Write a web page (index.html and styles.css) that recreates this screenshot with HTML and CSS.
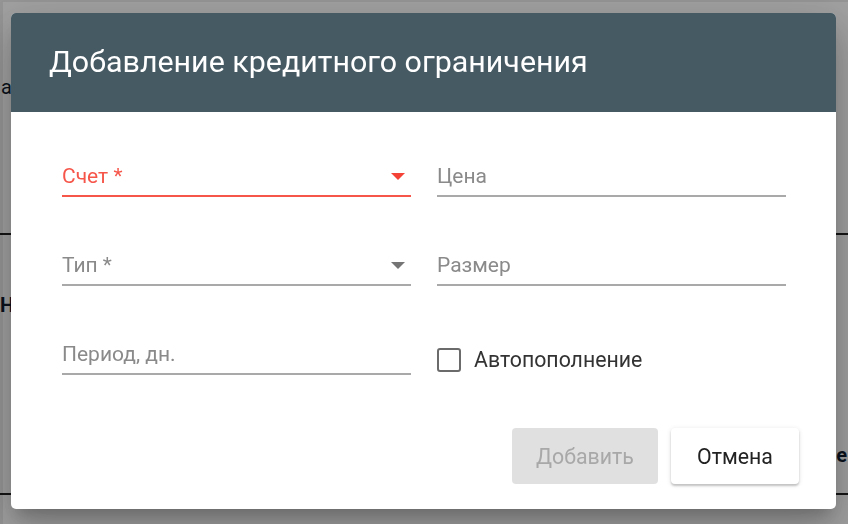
FILE: index.html
```html
<!DOCTYPE html>
<html lang="ru">
<head>
<meta charset="utf-8">
<title>Добавление кредитного ограничения</title>
<link rel="stylesheet" href="styles.css">
</head>
<body>
<div class="page">
  <div class="pg-top"><span class="pg-cut">а</span></div>
  <div class="pg-line"></div>
  <div class="pg-mid"><span class="pg-cut2">Н</span></div>
  <div class="pg-row"><span class="pg-right">е</span></div>
  <div class="pg-line"></div>
</div>
<div class="backdrop">
  <div class="dialog">
    <div class="dlg-head">Добавление кредитного ограничения</div>
    <div class="dlg-body">
      <div class="field error">
        <span class="label">Счет *</span>
        <svg class="arrow" width="14" height="7" viewBox="0 0 14 7"><path d="M0 0h14L7 7z" fill="currentColor"/></svg>
      </div>
      <div class="field"><span class="label">Цена</span></div>
      <div class="field">
        <span class="label">Тип *</span>
        <svg class="arrow" width="14" height="7" viewBox="0 0 14 7"><path d="M0 0h14L7 7z" fill="currentColor"/></svg>
      </div>
      <div class="field"><span class="label">Размер</span></div>
      <div class="field"><span class="label">Период, дн.</span></div>
      <label class="check"><span class="box"></span><span class="check-text">Автопополнение</span></label>
    </div>
    <div class="dlg-actions">
      <button class="btn btn-disabled" disabled>Добавить</button>
      <button class="btn btn-cancel">Отмена</button>
    </div>
  </div>
</div>
</body>
</html>
```
FILE: styles.css
```css
html, body {
  margin: 0;
  padding: 0;
  height: 100%;
}
body {
  background: #ffffff;
  font-family: Roboto, "Liberation Sans", Arial, sans-serif;
  overflow: hidden;
}
.page {
  width: 848px;
  height: 524px;
  color: #111c2e;
  font-size: 20px;
}
.pg-top {
  height: 233px;
  box-sizing: border-box;
  padding-top: 75px;
  white-space: nowrap;
}
.pg-cut { margin-left: 1px; }
.pg-line {
  height: 2px;
  background: #222;
}
.pg-mid {
  height: 90px;
  box-sizing: border-box;
  padding-top: 58px;
  font-weight: 700;
}
.pg-row {
  height: 168px;
  box-sizing: border-box;
  padding-top: 118px;
  text-align: right;
  font-weight: 700;
}
.pg-right { margin-right: 1px; }

.backdrop {
  position: fixed;
  inset: 0;
  background: rgba(0, 0, 0, 0.37);
  box-shadow: inset 3px 2px 0 rgba(0,0,0,0.08);
  padding: 13px 0 0 11px;
}
.dialog {
  width: 825px;
  height: 496px;
  background: #fff;
  border-radius: 5px;
  overflow: hidden;
  display: flex;
  flex-direction: column;
  box-shadow: 0 11px 15px -7px rgba(0,0,0,0.2), 0 24px 38px 3px rgba(0,0,0,0.14), 0 9px 46px 8px rgba(0,0,0,0.12);
}
.dlg-head {
  height: 99px;
  box-sizing: border-box;
  background: #465a64;
  color: #fff;
  font-size: 30.4px;
  line-height: 36px;
  padding: 31px 0 0 38px;
  white-space: nowrap;
}
.dlg-body {
  display: grid;
  grid-template-columns: 349px 349px;
  column-gap: 26px;
  row-gap: 41px;
  padding: 37px 0 0 51px;
}
.field {
  height: 48px;
  box-sizing: border-box;
  border-bottom: 2px solid #a9a9a9;
  display: flex;
  align-items: flex-end;
  justify-content: space-between;
  padding: 0 6px 7px 0;
  color: #8a8a8a;
}
.field.error {
  border-bottom-color: #f6564a;
  color: #f6564a;
}
.label {
  font-size: 21px;
  line-height: 24px;
}
.arrow {
  color: #757575;
  margin-bottom: 8px;
}
.error .arrow { color: #f44336; }
.check {
  align-self: end;
  display: flex;
  align-items: center;
  padding-bottom: 3px;
}
.box {
  width: 24px;
  height: 24px;
  box-sizing: border-box;
  border: 2.5px solid #6b6b6b;
  border-radius: 3px;
  margin-right: 13px;
}
.check-text {
  font-size: 21.3px;
  color: #333;
  line-height: 24px;
}
.dlg-actions {
  display: flex;
  justify-content: flex-end;
  gap: 13px;
  padding: 53px 37px 0 0;
}
.btn {
  height: 56px;
  border: none;
  border-radius: 4px;
  font-family: Roboto, "Liberation Sans", Arial, sans-serif;
  font-size: 21.3px;
  padding: 0 20px;
}
.btn-disabled {
  width: 146px;
  background: #e0e0e0;
  color: #a8a8a8;
}
.btn-cancel {
  width: 128px;
  background: #fff;
  color: #222;
  box-shadow: 0 2px 2px rgba(0,0,0,0.18), 0 1px 5px rgba(0,0,0,0.12);
}
```
